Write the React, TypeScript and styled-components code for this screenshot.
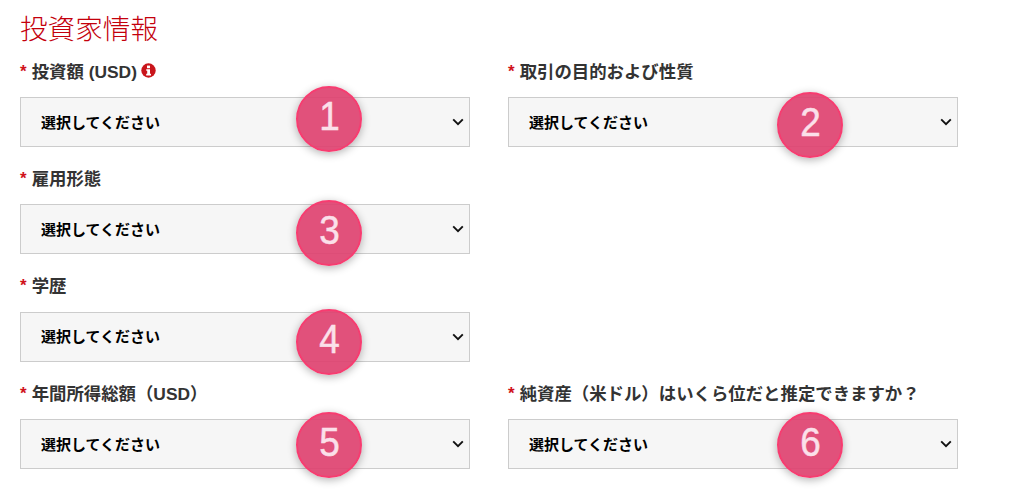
import React from 'react';
import styled, { createGlobalStyle } from 'styled-components';

const GlobalStyle = createGlobalStyle`
    html, body {
        margin: 0;
        padding: 0;
        background: #fff;
    }
    body {
        font-family: "Liberation Sans", Arial, "Noto Sans CJK JP", sans-serif;
    }
`;

const Chevron = () => (
    <svg width="12" height="8" viewBox="0 0 12 8" fill="none">
        <path d="M1.2 1.4L6 6.2L10.8 1.4" stroke="#111" strokeWidth="1.9" />
    </svg>
);

const InfoIcon = () => (
    <InfoSvg width="15" height="15" viewBox="0 0 15 15">
        <circle cx="7.5" cy="7.5" r="7.2" fill="#c9151b" />
        <rect x="6" y="2.6" width="3" height="2.6" fill="#fff" />
        <path d="M5.2 6.2H9V10.8H10V12.4H5.2V10.8H6.2V7.8H5.2Z" fill="#fff" />
    </InfoSvg>
);

type FieldProps = {
    label: string;
    num: number;
    badgeLeft: number;
    badgeTop: number;
    info?: boolean;
};

const Field = ({ label, num, badgeLeft, badgeTop, info }: FieldProps) => (
    <FieldBox>
        <Label>
            <Star>*</Star>
            <span>{label}</span>
            {info && <InfoIcon />}
        </Label>
        <SelectBox>
            <SelectText>選択してください</SelectText>
            <Chevron />
            <Badge $left={badgeLeft} $top={badgeTop}>
                <Digit>{num}</Digit>
            </Badge>
        </SelectBox>
    </FieldBox>
);

const App = () => (
    <>
        <GlobalStyle />
        <Page>
            <Title>投資家情報</Title>
            <Form>
                <Field label="投資額 (USD)" num={1} badgeLeft={275} badgeTop={-12} info />
                <Field label="取引の目的および性質" num={2} badgeLeft={268} badgeTop={-6} />
                <Field label="雇用形態" num={3} badgeLeft={275} badgeTop={-5} />
                <Blank />
                <Field label="学歴" num={4} badgeLeft={275} badgeTop={-4} />
                <Blank />
                <Field label="年間所得総額（USD）" num={5} badgeLeft={275} badgeTop={-8} />
                <Field label="純資産（米ドル）はいくら位だと推定できますか？" num={6} badgeLeft={268} badgeTop={-8} />
            </Form>
        </Page>
    </>
);

const Page = styled.div`
    width: 1023px;
    height: 497px;
    box-sizing: border-box;
    padding: 13px 20px 0;
    overflow: hidden;
`;

const Title = styled.h2`
    margin: 0;
    height: 34px;
    line-height: 34px;
    font-size: 27.6px;
    font-weight: 300;
    color: #c4000c;
`;

const Form = styled.div`
    display: grid;
    grid-template-columns: 450px 450px;
    column-gap: 38px;
    row-gap: 8px;
    margin-top: 11px;
`;

const FieldBox = styled.div`
    height: 99.4px;
`;

const Blank = styled.div``;

const Label = styled.div`
    display: flex;
    align-items: center;
    gap: 5px;
    height: 24px;
    margin-bottom: 15px;
    font-size: 17.4px;
    font-weight: 700;
    color: #333;
`;

const InfoSvg = styled.svg`
    margin-left: -1px;
`;

const Star = styled.span`
    color: #d0121b;
    font-size: 17px;
    line-height: 1;
    padding-top: 2px;
`;

const SelectBox = styled.div`
    position: relative;
    height: 50px;
    box-sizing: border-box;
    display: flex;
    align-items: center;
    justify-content: space-between;
    padding: 0 5px 0 20px;
    background: #f6f6f6;
    border: 1px solid #ccc;
    font-size: 15px;
    font-weight: 700;
    color: #000;
`;

const SelectText = styled.span`
    padding-bottom: 2px;
`;

const Badge = styled.div<{ $left: number; $top: number }>`
    position: absolute;
    top: ${p => p.$top}px;
    left: ${p => p.$left}px;
    width: 66px;
    height: 66px;
    box-sizing: border-box;
    display: flex;
    align-items: center;
    justify-content: center;
    padding-bottom: 5px;
    border-radius: 50%;
    background: rgba(222, 66, 112, 0.92);
    border: 2px solid #f73c70;
    box-shadow: 0 2px 8px rgba(0, 0, 0, 0.3);
`;

const Digit = styled.span`
    display: inline-block;
    transform: scaleX(0.9);
    font-family: "Liberation Sans", Arial, sans-serif;
    font-size: 41px;
    font-weight: 400;
    -webkit-text-stroke: 0.5px #fbe0ea;
    color: #fbe0ea;
`;

export default App;
